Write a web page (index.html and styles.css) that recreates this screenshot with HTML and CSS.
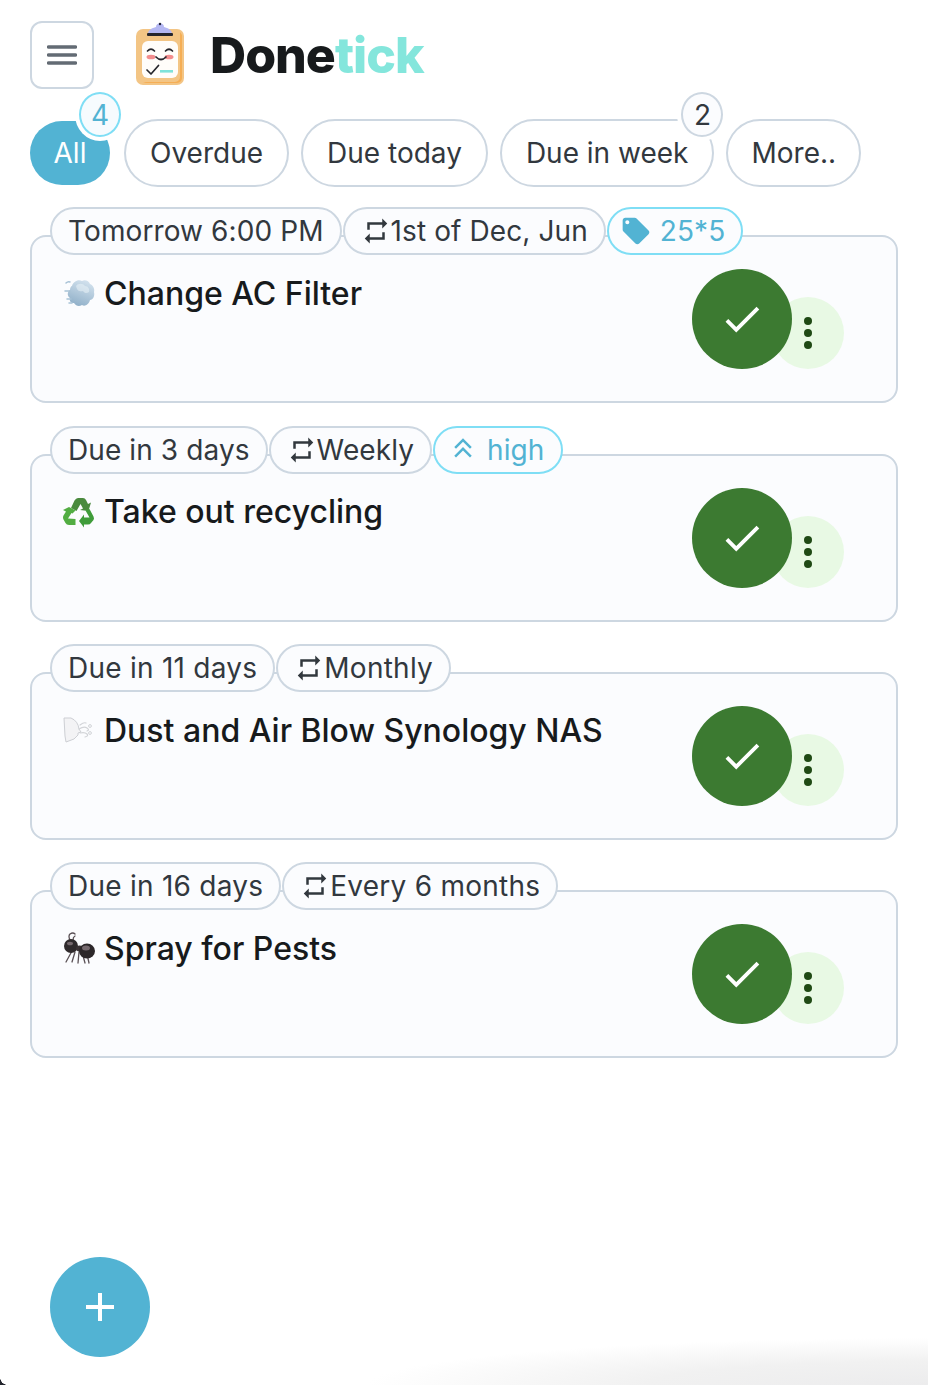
FILE: index.html
```html
<!DOCTYPE html>
<html lang="en">
<head>
<meta charset="utf-8">
<title>Donetick</title>
<link rel="stylesheet" href="styles.css">
</head>
<body>
<main class="page">
  <header class="header">
    <button class="menu-btn" aria-label="Menu">
      <svg class="menu-icon" viewBox="0 0 30 20"><path d="M1.5 2h27M1.5 10h27M1.5 18h27"/></svg>
    </button>
    <svg class="logo" viewBox="0 0 48 66">
      <rect x="0" y="9" width="48" height="56" rx="7" fill="#f3c585"/>
      <path d="M46 46v12a5 5 0 0 1-5 5H10l-3-1h32a5 5 0 0 0 5-5V12l2 3z" fill="#f5ae55"/>
      <rect x="6" y="21" width="36" height="37" rx="6" fill="#fffdfa"/>
      <path d="M12 14c0-4 4-6 8-7 0-5 8-5 8 0 4 1 8 3 8 7z" fill="#b4b7f2"/>
      <circle cx="24" cy="4" r="1.2" fill="#22233a"/>
      <rect x="11" y="13" width="26" height="3" rx="1" fill="#26262c"/>
      <ellipse cx="15" cy="37" rx="4.500" ry="2.300" fill="#f38d8e"/>
      <ellipse cx="33" cy="37" rx="4.500" ry="2.300" fill="#f38d8e"/>
      <path class="logo-line" d="M11.500 31q3.500-3.500 7 0M29.500 31q3.500-3.500 7 0M20 37q5 5 10 0M11 50l4 4 7.500-8.500"/>
      <rect x="24" y="50" width="13" height="2.600" fill="#7fe3da"/>
    </svg>
    <h1 class="brand">Done<span class="brand-accent">tick</span></h1>
  </header>

  <nav class="filters">
    <div class="filter filter-active">All<span class="badge badge-accent">4</span></div>
    <div class="filter">Overdue</div>
    <div class="filter">Due today</div>
    <div class="filter">Due in week<span class="badge badge-plain">2</span></div>
    <div class="filter filter-more">More..</div>
  </nav>

  <section class="tasks">
    <article class="task">
      <div class="chips">
        <span class="chip">Tomorrow 6:00 PM</span>
        <span class="chip"><svg class="repeat" viewBox="0 0 24 24"><path d="M7 7h10v3l4-4-4-4v3H5v6h2zm10 10H7v-3l-4 4 4 4v-3h12v-6h-2z"/></svg>1st of Dec, Jun</span>
        <span class="chip chip-accent"><svg class="tag" viewBox="0 0 24 24"><path d="M21.410 11.580l-9-9C12.050 2.220 11.550 2 11 2H4c-1.100 0-2 .9-2 2v7c0 .55.22 1.050.59 1.420l9 9c.36.36.86.58 1.410.58.55 0 1.050-.22 1.410-.59l7-7c.37-.36.59-.86.59-1.410 0-.55-.23-1.060-.59-1.420zM5.500 7C4.670 7 4 6.330 4 5.500S4.670 4 5.500 4 7 4.670 7 5.500 6.330 7 5.500 7z"/></svg>25*5</span>
      </div>
      <div class="card">
        <div class="title">
          <svg class="emoji" viewBox="0 0 33 33">
            <defs><linearGradient id="cloud" x1="0.7" y1="0" x2="0.3" y2="1"><stop offset="0" stop-color="#d3e2ee"/><stop offset="1" stop-color="#8fafc8"/></linearGradient></defs>
            <path fill="url(#cloud)" d="M10 9c1-4 6-7 10-5 3-2 7 0 8 3 3 1 5 5 4 8 1 4-1 8-4 8-1 4-5 7-8 5-3 2-6 1-8-2-3 0-5-2-4-5-3-2-3-6 0-8 0-2 1-4 2-4z"/>
            <path fill="#eef5fa" opacity=".5" d="M14 9c2-3 7-3 9 0 3 0 5 3 4 6-2 2-5 1-6-1-3 1-6 0-7-5z"/>
            <path d="M4 6q2-2 4-1M3 14h5M5 22h4M7 26h3" fill="none" stroke="#a8c2d6" stroke-width="1.500" stroke-linecap="round"/>
          </svg>
          <span>Change AC Filter</span>
        </div>
        <div class="actions">
          <button class="check" aria-label="Complete"><svg class="check-icon" viewBox="0 0 24 24"><path d="M9 16.170 4.830 12l-1.420 1.410L9 19 21 7l-1.410-1.410z"/></svg></button>
          <button class="more" aria-label="More"><svg class="more-icon" viewBox="0 0 24 24"><circle cx="12" cy="6" r="2"/><circle cx="12" cy="12" r="2"/><circle cx="12" cy="18" r="2"/></svg></button>
        </div>
      </div>
    </article>

    <article class="task">
      <div class="chips">
        <span class="chip">Due in 3 days</span>
        <span class="chip"><svg class="repeat" viewBox="0 0 24 24"><path d="M7 7h10v3l4-4-4-4v3H5v6h2zm10 10H7v-3l-4 4 4 4v-3h12v-6h-2z"/></svg>Weekly</span>
        <span class="chip chip-accent chip-priority"><svg class="priority" viewBox="0 0 24 24"><path d="M17.590 18 19 16.590l-7-7-7 7L6.410 18 12 12.420zM17.590 11 19 9.590l-7-7-7 7L6.410 11 12 5.420z"/></svg>high</span>
      </div>
      <div class="card">
        <div class="title">
          <svg class="emoji" viewBox="0 0 33 33">
            <path fill="#4a8a3e" d="M9 13l3.500-7.500Q14 3 16 3h5q2 0 3 2l2 4 3-1.500L26.500 16 18 15l3-1.500L18.500 9l-4 7z"/>
            <path fill="#3f9c3a" d="M27.500 14l4 7.500q1 2 0 3.500l-2.500 3q-1 1.500-3 1.500h-4v3l-5-6.500 5-6.500v3h5.500l-4-7z"/>
            <path fill="#52ad42" d="M5 13l2-1 6.500 3.500-3 3-1-.5L6 23.500 13.500 24v6H7q-2.500 0-3.500-2l-2-3.500q-1-2 0-4l2.500-4-3-1.500z"/>
          </svg>
          <span>Take out recycling</span>
        </div>
        <div class="actions">
          <button class="check" aria-label="Complete"><svg class="check-icon" viewBox="0 0 24 24"><path d="M9 16.170 4.830 12l-1.420 1.410L9 19 21 7l-1.410-1.410z"/></svg></button>
          <button class="more" aria-label="More"><svg class="more-icon" viewBox="0 0 24 24"><circle cx="12" cy="6" r="2"/><circle cx="12" cy="12" r="2"/><circle cx="12" cy="18" r="2"/></svg></button>
        </div>
      </div>
    </article>

    <article class="task">
      <div class="chips">
        <span class="chip chip-wide">Due in 11 days</span>
        <span class="chip chip-wide"><svg class="repeat" viewBox="0 0 24 24"><path d="M7 7h10v3l4-4-4-4v3H5v6h2zm10 10H7v-3l-4 4 4 4v-3h12v-6h-2z"/></svg>Monthly</span>
      </div>
      <div class="card">
        <div class="title">
          <svg class="emoji" viewBox="0 0 33 33">
            <path d="M2 4h7q7 3 8 11l2 3-3 1v2l-4 4-8 3-1-6z" fill="#f3f3f5" stroke="#cdcfd4" stroke-width="1"/>
            <path d="M17 15q5-3 8-1t0 3M18 19q5-1 7 1t-2 3M18 11q4-3 6-2" fill="none" stroke="#d2d4d8" stroke-width="1.200" stroke-linecap="round"/>
            <circle cx="28" cy="12" r="1.400" fill="none" stroke="#d2d4d8"/>
            <circle cx="28" cy="19" r="1.400" fill="none" stroke="#d2d4d8"/>
          </svg>
          <span>Dust and Air Blow Synology NAS</span>
        </div>
        <div class="actions">
          <button class="check" aria-label="Complete"><svg class="check-icon" viewBox="0 0 24 24"><path d="M9 16.170 4.830 12l-1.420 1.410L9 19 21 7l-1.410-1.410z"/></svg></button>
          <button class="more" aria-label="More"><svg class="more-icon" viewBox="0 0 24 24"><circle cx="12" cy="6" r="2"/><circle cx="12" cy="12" r="2"/><circle cx="12" cy="18" r="2"/></svg></button>
        </div>
      </div>
    </article>

    <article class="task">
      <div class="chips">
        <span class="chip chip-wide">Due in 16 days</span>
        <span class="chip chip-wide"><svg class="repeat" viewBox="0 0 24 24"><path d="M7 7h10v3l4-4-4-4v3H5v6h2zm10 10H7v-3l-4 4 4 4v-3h12v-6h-2z"/></svg>Every 6 months</span>
      </div>
      <div class="card">
        <div class="title">
          <svg class="emoji" viewBox="0 0 33 33">
            <path d="M8 8Q6 4 8 2q3-2 5 0M11 8q0-3 2-4M10 19l-6 11M13 20l-3 10M17 20l-1 11M20 20l3 11M25 22l2 9" fill="none" stroke="#5a5055" stroke-width="1.300" stroke-linecap="round"/>
            <circle cx="9" cy="14" r="7" fill="#2f2a2c"/>
            <ellipse cx="17.500" cy="16.500" rx="3.500" ry="3" fill="#3a3235"/>
            <ellipse cx="25" cy="19" rx="8" ry="7.500" fill="#2c2729"/>
            <ellipse cx="24" cy="16" rx="4" ry="2.500" fill="#75696e"/>
            <ellipse cx="8" cy="11.500" rx="3" ry="1.800" fill="#75696e"/>
          </svg>
          <span>Spray for Pests</span>
        </div>
        <div class="actions">
          <button class="check" aria-label="Complete"><svg class="check-icon" viewBox="0 0 24 24"><path d="M9 16.170 4.830 12l-1.420 1.410L9 19 21 7l-1.410-1.410z"/></svg></button>
          <button class="more" aria-label="More"><svg class="more-icon" viewBox="0 0 24 24"><circle cx="12" cy="6" r="2"/><circle cx="12" cy="12" r="2"/><circle cx="12" cy="18" r="2"/></svg></button>
        </div>
      </div>
    </article>
  </section>

  <button class="fab" aria-label="Add task"><svg class="fab-icon" viewBox="0 0 28 28"><path d="M12 0h4v12h12v4H16v12h-4V16H0v-4h12z"/></svg></button>
  <div class="shade"></div>
  <div class="corner"></div>
</main>
</body>
</html>
```
FILE: styles.css
```css
* { box-sizing: border-box; }
html, body { margin: 0; height: 100%; overflow: hidden; background: #fff; }
body { font-family: Inter, "Liberation Sans", sans-serif; color: #171a1c; }
.page { position: relative; height: 1385px; padding: 21px 30px 0; overflow: hidden; }

.header { display: flex; align-items: center; height: 68px; }
.menu-btn { display: flex; align-items: center; justify-content: center; width: 64px; height: 68px; padding: 0; background: #fff; border: 2px solid #cdd7e1; border-radius: 12px; }
.menu-icon { width: 30px; height: 20px; fill: none; stroke: #636b74; stroke-width: 3.400; stroke-linecap: round; }
.logo { width: 48px; height: 66px; margin-left: 42px; margin-top: -4px; }
.logo-line { fill: none; stroke: #26262c; stroke-width: 1.700; stroke-linecap: round; stroke-linejoin: round; }
.brand { margin: 0 0 0 26px; font-size: 50px; font-weight: 800; line-height: 1; letter-spacing: -1px; color: #171a1c; }
.brand-accent { color: #84e6dc; }

.filters { display: flex; align-items: center; gap: 12px; margin-top: 30px; height: 68px; }
.filter { position: relative; display: flex; align-items: center; height: 68px; padding: 0 24px; border: 2px solid #cdd7e1; border-radius: 34px; background: #fff; font-size: 28px; color: #32383e; }
.filter-active { height: 64px; width: 80px; padding: 0; margin-right: 2px; justify-content: center; border: 0; border-radius: 32px; background: #52b3d3; color: #fff; }
.filter-more { padding: 0 23px; }
.badge { position: absolute; display: flex; align-items: center; justify-content: center; width: 42px; height: 45px; border-radius: 50%; font-size: 28px; box-shadow: 0 0 0 4px #fff; }
.badge-accent { top: -29px; right: -11px; background: #f6fbfe; border: 2px solid #7fdef5; color: #52b3d3; }
.badge-plain { top: -29px; right: -11px; background: #fbfcfe; border: 2px solid #cdd7e1; color: #32383e; }

.tasks { margin-top: 20.400px; }
.task { margin-bottom: 22.330px; }
.chips { position: relative; z-index: 1; display: flex; gap: 1px; padding-left: 20px; height: 48px; }
.chip { display: flex; align-items: center; height: 48px; padding: 0 16px; border: 2px solid #cdd7e1; border-radius: 24px; background: #fbfcfe; font-size: 28px; letter-spacing: 0.1px; color: #32383e; white-space: nowrap; }
.chip-wide { letter-spacing: 0.25px; }
.chip-accent { padding-left: 11px; border-color: #7fdef5; color: #52b3d3; }
.chip-priority { padding-left: 13px; }
.repeat { width: 30px; height: 30px; fill: #32383e; }
.tag { width: 32px; height: 32px; margin-right: 8px; fill: #52b3d3; }
.priority { width: 30px; height: 30px; margin-right: 9px; fill: #52b3d3; }

.card { display: flex; justify-content: space-between; height: 168px; margin-top: -20px; padding: 32px 52px 32px 30px; background: #fbfcfe; border: 2px solid #cdd7e1; border-radius: 16px; }
.title { display: flex; align-items: center; gap: 9px; height: 48px; font-size: 32px; font-weight: 500; color: #171a1c; }
.emoji { width: 33px; height: 33px; flex: none; }
.actions { display: flex; align-items: flex-end; }
.check { position: relative; z-index: 1; display: flex; align-items: center; justify-content: center; width: 100px; height: 100px; padding: 0; border: 0; border-radius: 50%; background: #3c7a31; }
.check-icon { width: 46px; height: 46px; fill: #fff; }
.more { display: flex; align-items: center; justify-content: center; width: 72px; height: 72px; margin-left: -20px; padding: 0; border: 0; border-radius: 50%; background: #e8f9e4; }
.more-icon { width: 48px; height: 48px; fill: #1f4a14; }

.fab { position: absolute; left: 50px; top: 1257px; display: flex; align-items: center; justify-content: center; width: 100px; height: 100px; padding: 0; border: 0; border-radius: 50%; background: #52b3d3; }
.fab-icon { width: 28px; height: 28px; fill: #fff; }
.shade { position: absolute; right: 0; bottom: 0; width: 560px; height: 47px; background: radial-gradient(ellipse 560px 47px at 100% 100%, #ececed 0%, #f1f1f1 50%, #ffffff 100%); }
.corner { position: absolute; left: 0; bottom: 0; width: 8px; height: 8px; background: radial-gradient(circle 8px at 100% 0, transparent 98%, #23252d 100%); }
```
